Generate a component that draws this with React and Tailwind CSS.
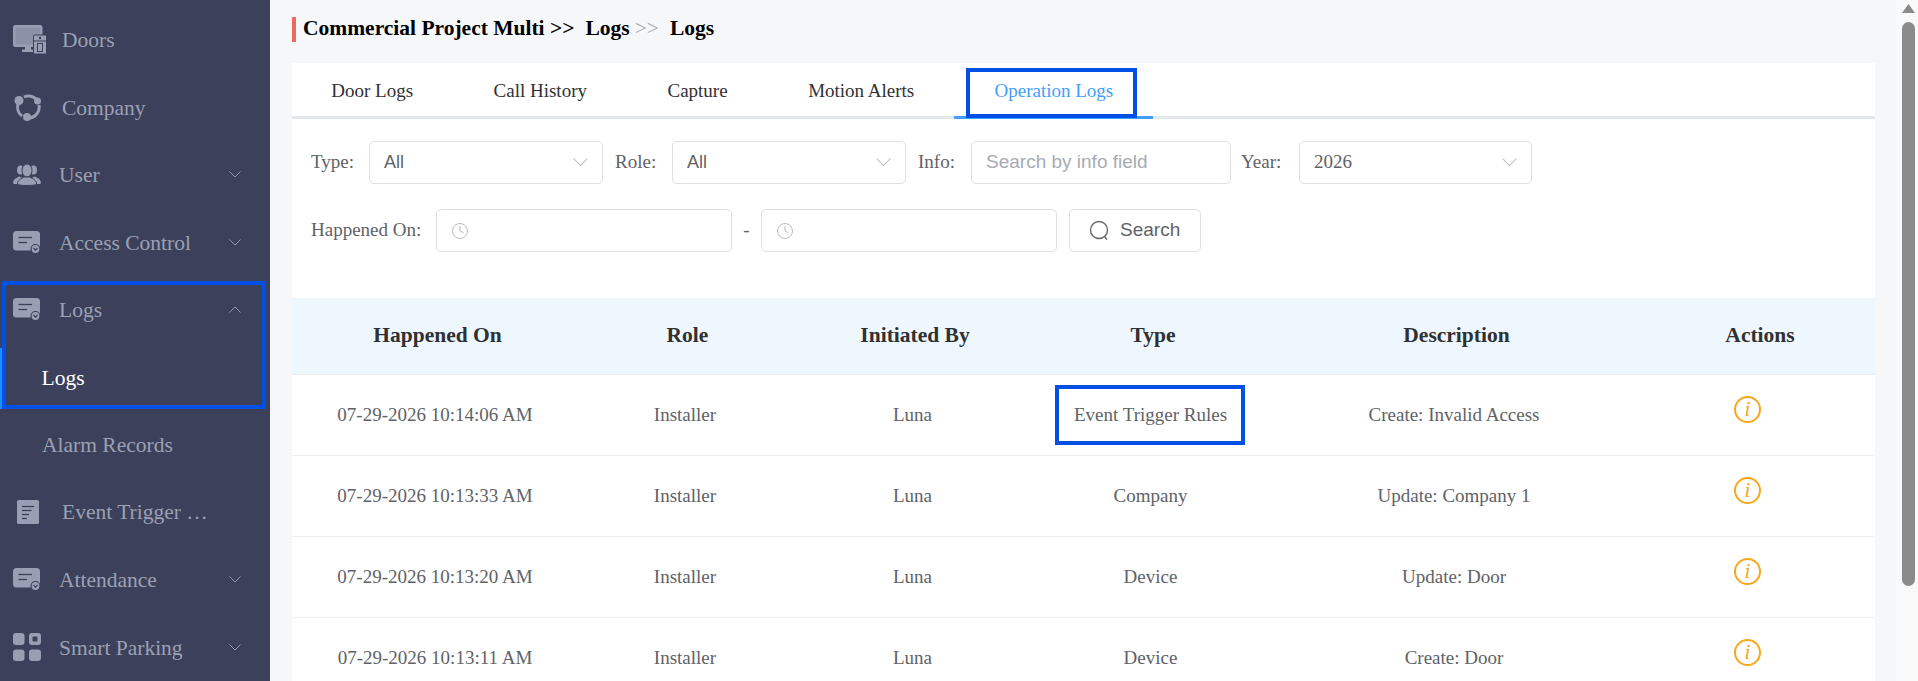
import React from "react";
import { Clock } from "lucide-react";

const ICON = "#999eb2";
const BG = "#3c405b";

const DoorsIcon = () => (
  <svg width="34" height="29" viewBox="0 0 34 29">
    <rect x="0" y="0" width="29.5" height="22" rx="2.5" fill={ICON} />
    <rect x="2.5" y="2.5" width="24.5" height="17" fill="#8c91a8" />
    <path d="M12 22h6v2.5h4v2.5H9v-2.5h3z" fill={ICON} />
    <rect x="20.5" y="10" width="13" height="19" rx="1" fill={ICON} stroke={BG} strokeWidth="1" />
    <line x1="21" y1="16" x2="33" y2="16" stroke={BG} strokeWidth="1" />
    <circle cx="27" cy="13" r="1.2" fill={BG} />
    <rect x="24.5" y="18.5" width="5" height="8" fill="none" stroke={BG} strokeWidth="1" />
  </svg>
);

const CompanyIcon = () => (
  <svg width="28" height="28" viewBox="0 0 28 28" fill="none" stroke={ICON} strokeWidth="3">
    <path d="M4 11a11 11 0 0 0 4 12" />
    <path d="M10 4a11 11 0 0 1 13 3" />
    <path d="M25 12a11 11 0 0 1-10 13" />
    <circle cx="5" cy="7.5" r="4.5" fill={ICON} stroke="none" />
    <circle cx="23.5" cy="8" r="3.5" fill={ICON} stroke="none" />
    <circle cx="13" cy="24" r="4" fill={ICON} stroke="none" />
  </svg>
);

const UserIcon = () => (
  <svg width="28" height="22" viewBox="0 0 28 22" fill={ICON}>
    <ellipse cx="7.5" cy="6" rx="3.5" ry="4.5" />
    <ellipse cx="20.5" cy="6" rx="3.5" ry="4.5" />
    <path d="M0 19c0-4 4-5 6-6.5l3 1-3 6.5H1z" />
    <path d="M28 19c0-4-4-5-6-6.5l-3 1 3 6.5h5z" />
    <ellipse cx="14" cy="6.5" rx="5" ry="6.5" stroke={BG} strokeWidth="1" />
    <path d="M4.5 20c0-4 4-5.5 6.5-7h6c2.5 1.5 6.5 3 6.5 7 0 2-19 2-19 0z" stroke={BG} strokeWidth="1" />
  </svg>
);

const CardIcon = () => (
  <svg width="28" height="23" viewBox="0 0 28 23">
    <rect x="0" y="0" width="27" height="19.5" rx="3.5" fill={ICON} />
    <line x1="5.5" y1="6.5" x2="19" y2="6.5" stroke={BG} strokeWidth="1.3" />
    <line x1="5.5" y1="11.5" x2="14" y2="11.5" stroke={BG} strokeWidth="1.3" />
    <circle cx="22.5" cy="18" r="4.5" fill={ICON} stroke={BG} strokeWidth="1.2" />
    <path d="M20.5 17l2 2.2 2-2.2" fill="none" stroke={BG} strokeWidth="1.2" />
  </svg>
);

const DocIcon = () => (
  <svg width="22" height="24" viewBox="0 0 22 24">
    <rect x="0" y="0" width="22" height="24" rx="1.5" fill={ICON} />
    <line x1="5" y1="6.5" x2="17" y2="6.5" stroke={BG} strokeWidth="1.3" />
    <line x1="5" y1="10.5" x2="14.5" y2="10.5" stroke={BG} strokeWidth="1.3" />
    <line x1="5" y1="14.5" x2="12" y2="14.5" stroke={BG} strokeWidth="1.3" />
    <line x1="5" y1="18.5" x2="10" y2="18.5" stroke={BG} strokeWidth="1.3" />
  </svg>
);

const GridIcon = () => (
  <svg width="28" height="28" viewBox="0 0 28 28" fill={ICON}>
    <rect x="0" y="0" width="11.5" height="12" rx="3" />
    <rect x="16" y="0" width="12" height="12" rx="3" />
    <rect x="19.5" y="3.5" width="5" height="5" rx="1" fill={BG} />
    <rect x="0" y="16.5" width="11.5" height="11.5" rx="3" />
    <rect x="16" y="16.5" width="12" height="11.5" rx="3" />
  </svg>
);

const Chevron = ({ up, width = 12, color = "#9ba0b3" }) => (
  <svg
    width={width}
    height={(width * 7) / 12}
    viewBox="0 0 12 7"
    fill="none"
    stroke={color}
    strokeWidth="0.9"
    className={up ? "rotate-180" : ""}
  >
    <path d="M0.5 0.5L6 6l5.5-5.5" />
  </svg>
);

const NavItem = ({ icon, label, slot = "w-[46px]", arrow, up }) => (
  <div className="h-[67.5px] pl-[13px] pr-[29px] flex items-center text-[#9ba0b3]">
    <div className={`${slot} shrink-0 flex items-center`}>{icon}</div>
    <span className="flex-1 pt-[1px] text-[21.5px] truncate">{label}</span>
    {arrow && <Chevron up={up} />}
  </div>
);

const Sidebar = () => (
  <aside className="w-[270px] shrink-0 bg-[#3c405b] pt-[6px] overflow-hidden">
    <NavItem icon={<DoorsIcon />} label="Doors" slot="w-[49px]" />
    <NavItem icon={<CompanyIcon />} label="Company" slot="w-[49px] pl-[1px]" />
    <NavItem icon={<UserIcon />} label="User" arrow />
    <NavItem icon={<CardIcon />} label="Access Control" arrow />
    <div className="relative">
      <NavItem icon={<CardIcon />} label="Logs" arrow up />
      <div className="relative h-[67.5px] pl-[41.5px] pt-[1px] flex items-center text-[21.5px] text-white">
        <span className="absolute left-0 top-[4.5px] w-[4px] h-[61px] bg-[#1890ff]" />
        Logs
      </div>
      <div className="absolute left-[2px] top-[5px] w-[264px] h-[128px] border-[4px] border-[#0050e6]" />
    </div>
    <div className="h-[67.5px] pl-[42px] pt-[1px] flex items-center text-[21.5px] text-[#9ba0b3]">Alarm Records</div>
    <div className="h-[67.5px] pl-[17px] flex items-center text-[#9ba0b3]">
      <div className="w-[45px] shrink-0 flex items-center">
        <DocIcon />
      </div>
      <span className="text-[21.5px]">Event Trigger …</span>
    </div>
    <NavItem icon={<CardIcon />} label="Attendance" arrow />
    <NavItem icon={<GridIcon />} label="Smart Parking" arrow />
  </aside>
);

const tabs = ["Door Logs", "Call History", "Capture", "Motion Alerts", "Operation Logs"];

const Tabs = () => (
  <div className="flex h-[56px] border-b-[3px] border-[#e4e7ed] text-[19px] text-[#303133]">
    {tabs.map((t, i) =>
      t === "Operation Logs" ? (
        <div key={t} className="relative h-[56px] pt-[3px] px-[40px] flex items-center border-b-[3px] border-[#409eff] text-[#409eff]">
          {t}
          <div className="absolute left-[12px] top-[5px] w-[171px] h-[50px] border-[4px] border-[#0050e6]" />
        </div>
      ) : (
        <div key={t} className={`px-[40.25px] pt-[3px] flex items-center ${i === 0 ? "-ml-[1px]" : ""}`}>
          {t}
        </div>
      )
    )}
  </div>
);

const Select = ({ value, sans, width = "w-[234px]" }) => (
  <div className={`${width} h-[43px] shrink-0 border border-[#dcdfe6] rounded-[5px] px-[14px] flex items-center justify-between ${sans ? "font-['Liberation_Sans',sans-serif] text-[18px]" : "text-[19px]"} text-[#606266]`}>
    <span>{value}</span>
    <Chevron width={15} color="#c0c4cc" />
  </div>
);

const DateInput = () => (
  <div className="w-[296px] h-[43px] shrink-0 border border-[#dcdfe6] rounded-[5px] pl-[14px] flex items-center">
    <Clock size={18} strokeWidth={1.3} color="#b4b8c0" />
  </div>
);

const Filters = () => (
  <div className="pl-[19px] pt-[22px] text-[19px] text-[#606266]">
    <div className="flex items-center h-[43px]">
      <span className="w-[58px]">Type:</span>
      <Select value="All" sans />
      <span className="w-[57px] ml-[12px]">Role:</span>
      <Select value="All" sans />
      <span className="w-[53px] ml-[12px]">Info:</span>
      <div className="w-[260px] h-[43px] border border-[#dcdfe6] rounded-[5px] pl-[14px] flex items-center text-[#a8abb2] font-['Liberation_Sans',sans-serif]">
        Search by info field
      </div>
      <span className="w-[58px] ml-[10px]">Year:</span>
      <Select value="2026" width="w-[233px]" />
    </div>
    <div className="flex items-center h-[43px] mt-[25px]">
      <span className="w-[125px]">Happened On:</span>
      <DateInput />
      <span className="w-[29px] text-center">-</span>
      <DateInput />
      <div className="ml-[12px] w-[132px] h-[43px] border border-[#dcdfe6] rounded-[5px] pl-[19px] flex items-center gap-[10px] font-['Liberation_Sans',sans-serif]">
        <svg width="21" height="21" viewBox="0 0 21 21" fill="none" stroke="#606266" strokeWidth="1.3">
          <circle cx="10" cy="10" r="8.5" />
          <path d="M15.5 16.5l2.5 3" />
        </svg>
        Search
      </div>
    </div>
  </div>
);

const rows = [
  ["07-29-2026 10:14:06 AM", "Event Trigger Rules", "Create: Invalid Access"],
  ["07-29-2026 10:13:33 AM", "Company", "Update: Company 1"],
  ["07-29-2026 10:13:20 AM", "Device", "Update: Door"],
  ["07-29-2026 10:13:11 AM", "Device", "Create: Door"],
];

const headers = ["Happened On", "Role", "Initiated By", "Type", "Description", "Actions"];

const LogsTable = () => (
  <table className="mt-[46px] w-full table-fixed border-collapse">
    <colgroup>
      <col className="w-[286px]" />
      <col className="w-[214px]" />
      <col className="w-[241px]" />
      <col className="w-[235px]" />
      <col className="w-[372px]" />
      <col className="w-[235px]" />
    </colgroup>
    <thead>
      <tr className="h-[76px] bg-[#eff7fe] border-b border-[#ebeef5]">
        {headers.map((h) => (
          <th key={h} className="pl-[5px] pb-[2px] text-center text-[21.5px] font-bold text-[#303133]">
            {h}
          </th>
        ))}
      </tr>
    </thead>
    <tbody className="text-[19px] text-[#606266] text-center">
      {rows.map(([time, type, desc]) => (
        <tr key={time} className="h-[81px] border-b border-[#ebeef5]">
          <td className="pt-[2px]">{time}</td>
          <td className="pt-[2px]">Installer</td>
          <td className="pt-[2px]">Luna</td>
          <td className="relative pt-[2px]">
            {type}
            {type === "Event Trigger Rules" && (
              <div className="absolute left-[22px] top-[10px] w-[190px] h-[60px] border-[4px] border-[#0050e6]" />
            )}
          </td>
          <td className="pt-[2px]">{desc}</td>
          <td className="pl-[94px]">
            <div className="w-[27px] h-[27px] mb-[10px] rounded-full border-2 border-[#faa61a] flex items-center justify-center text-[21px] italic text-[#faa61a]">
              i
            </div>
          </td>
        </tr>
      ))}
    </tbody>
  </table>
);

const Scrollbar = () => (
  <div className="w-[22px] shrink-0 bg-[#f9f9f9] pl-[6px] pt-[4px]">
    <div className="w-[13px] h-[9px] bg-[#8a8a8a] [clip-path:polygon(50%_0,100%_100%,0_100%)]" />
    <div className="mt-[9px] w-[13px] h-[564px] rounded-[7px] bg-[#8a8a8a]" />
  </div>
);

export default function App() {
  return (
    <div className="h-screen flex overflow-hidden bg-[#f6f7f9] font-['Liberation_Serif',serif]">
      <Sidebar />
      <main className="flex-1 min-w-0 pl-[22px] pr-[21px]">
        <div className="h-[63px] pt-[17px]">
          <div className="h-[25px] border-l-[4px] border-[#ee6a60] pl-[7px] pb-[2px] flex items-center text-[21.5px] font-bold text-black whitespace-pre">
            Commercial Project Multi <span>{">>"}</span>
            <span className="ml-[11px]">Logs</span>
            <span className="ml-[5px] font-normal text-[#a8abb2]">{">>"}</span>
            <span className="ml-[11px]">Logs</span>
          </div>
        </div>
        <div className="bg-white">
          <Tabs />
          <Filters />
          <LogsTable />
        </div>
      </main>
      <Scrollbar />
    </div>
  );
}
